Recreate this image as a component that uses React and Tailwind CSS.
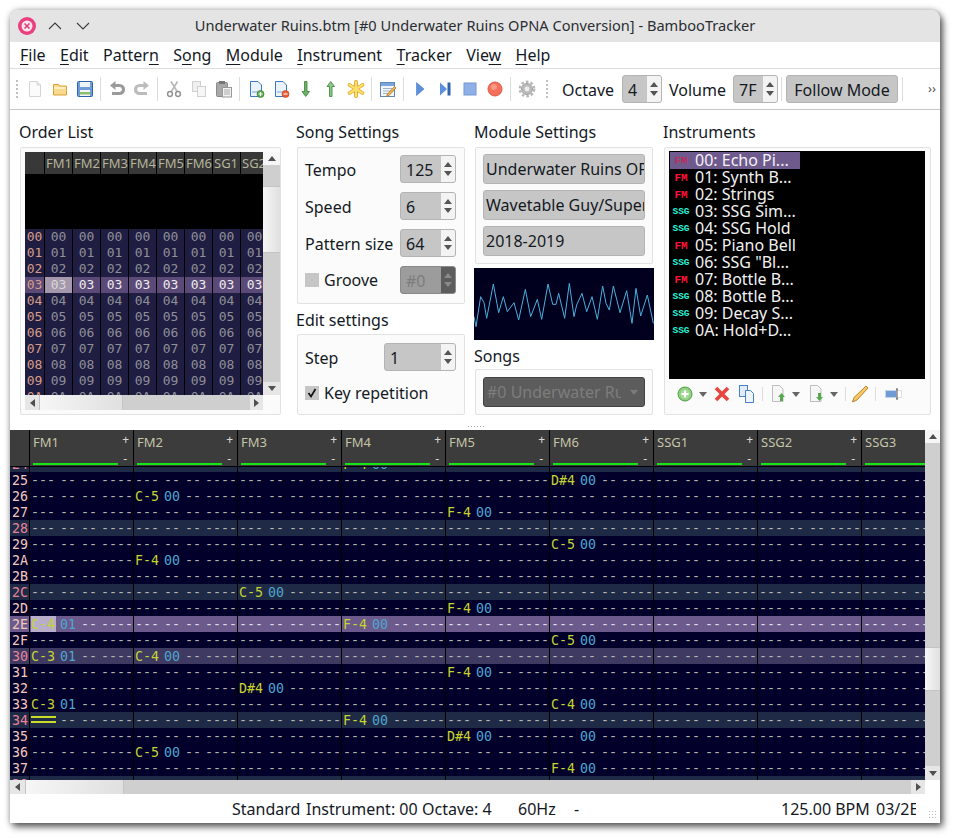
const uiFont = "font-['Noto_Sans','DejaVu_Sans',sans-serif]"
const monoFont = "font-['DejaVu_Sans_Mono',monospace]"

const Svg = ({size = 20, children}) => (
    <svg width={size} height={size} viewBox="0 0 20 20" className="block">{children}</svg>
)

const doc = "M4.5 2.5h7.5l3.5 3.5v11.5h-11z"

const icons = {
    newFile: <><path d={doc} fill="#fbfbfb" stroke="#d4d4d4"/><path d="M12 2.5v3.5h3.5" fill="#eee" stroke="#d4d4d4"/></>,
    open: <><path d="M3.5 5.5h5l1 1.5h7v9h-13z" fill="#f8d98e" stroke="#dc9f35"/><path d="M4 9h12" stroke="#fdf0c4" strokeWidth="2"/></>,
    save: <><rect x="2.5" y="2.5" width="15" height="15" rx="1" fill="#6f9bd6" stroke="#2f64aa"/><rect x="5" y="3" width="10" height="5" fill="#eef3fa"/><rect x="5" y="11" width="10" height="6" fill="#f4f4f4"/><rect x="5" y="13" width="10" height="2.5" fill="#8cc06c"/></>,
    undo: <><path d="M8 6.5h4.5a4 4 0 0 1 0 8H5" fill="none" stroke="#9a9a9a" strokeWidth="3.2"/><path d="M8.5 2v9L3 6.5z" fill="#9a9a9a"/></>,
    redo: <><path d="M12 6.5H7.5a4 4 0 0 0 0 8H15" fill="none" stroke="#bcbcbc" strokeWidth="3.2"/><path d="M11.5 2v9L17 6.5z" fill="#bcbcbc"/></>,
    cut: <><path d="M13.5 2.5L7 13M7 2.5l6.5 10.5" stroke="#b8b8b8" strokeWidth="1.6"/><circle cx="6" cy="15" r="2.4" fill="none" stroke="#949494" strokeWidth="1.5"/><circle cx="14" cy="15" r="2.4" fill="none" stroke="#949494" strokeWidth="1.5"/></>,
    copy: <><rect x="3.5" y="2.5" width="8" height="10" fill="#f0f0f0" stroke="#d0d0d0"/><rect x="8.5" y="7.5" width="8" height="10" fill="#f6f6f6" stroke="#d0d0d0"/></>,
    paste: <><rect x="2.5" y="3.5" width="11" height="14" rx="1" fill="#a8a8a8" stroke="#8a8a8a"/><rect x="5" y="2" width="6" height="3" fill="#777"/><rect x="8.5" y="8.5" width="9" height="9.5" fill="#f2f2f2" stroke="#999"/><path d="M10 11h6M10 13h6M10 15h6" stroke="#aaa"/></>,
    insert: <><path d={doc} fill="#eaf2fb" stroke="#3b78c0"/><path d="M6 13h6" stroke="#7aa7dc"/><circle cx="14.5" cy="15" r="3.5" fill="#5cae4c" stroke="#3a8030" strokeWidth="0.7"/><path d="M12.5 15h4M14.5 13v4" stroke="#fff" strokeWidth="1.2"/></>,
    remove: <><path d={doc} fill="#eaf2fb" stroke="#3b78c0"/><path d="M6 13h6" stroke="#7aa7dc"/><circle cx="14.5" cy="15" r="3.5" fill="#e8603a" stroke="#c0401c" strokeWidth="0.7"/><path d="M12.5 15h4" stroke="#fff" strokeWidth="1.2"/></>,
    down: <path d="M8.5 2.5h2.5v10h2.5L9.75 17.5 6 12.5h2.5z" fill="#6ab465" stroke="#3c7f3a" strokeWidth="0.8"/>,
    up: <path d="M8.5 17.5h2.5v-10h2.5L9.75 2.5 6 7.5h2.5z" fill="#8ccb86" stroke="#3c7f3a" strokeWidth="0.8"/>,
    star: <><path d="M10 3v14M3.5 6l13 8M16.5 6l-13 8" stroke="#e0a420" strokeWidth="3.8" strokeLinecap="round"/><path d="M10 3v14M3.5 6l13 8M16.5 6l-13 8" stroke="#fbe070" strokeWidth="2.2" strokeLinecap="round"/></>,
    edit: <><rect x="2.5" y="3.5" width="14" height="14" fill="#f2f6fb" stroke="#5f87b8"/><rect x="3" y="4" width="13" height="3" fill="#7ea5da"/><path d="M5 9.5h9M5 12h9M5 14.5h5" stroke="#9fb4cc"/><path d="M18 9l-7 7.5-2.5 1 1-2.5 7-7.5z" fill="#f0b848" stroke="#a86c18" strokeWidth="0.7"/></>,
    play: <path d="M6.5 3.5l7.5 6.5-7.5 6.5z" fill="#5b90dc" stroke="#4678c4" strokeWidth="0.6"/>,
    step: <><path d="M5 3.5l7 6.5-7 6.5z" fill="#5b90dc"/><rect x="12.5" y="3.5" width="3" height="13" fill="#2f64aa"/></>,
    stop: <rect x="4" y="4" width="12" height="12" fill="#8fb0e6" stroke="#7498d2"/>,
    record: <><circle cx="10" cy="10" r="7" fill="#f4705a" stroke="#e05a48"/><circle cx="9" cy="8" r="3" fill="#fb9a84"/></>,
    gear: <><circle cx="10" cy="10" r="5.5" fill="#bcbcbc" stroke="#a0a0a0"/><circle cx="10" cy="10" r="7.2" fill="none" stroke="#b8b8b8" strokeWidth="2.4" strokeDasharray="2.6 2.05"/><circle cx="10" cy="10" r="2.4" fill="#eee"/></>,
}

const ToolIcon = ({name}) => (
    <span className="flex h-[25px] w-[25px] shrink-0 items-center justify-center"><Svg>{icons[name]}</Svg></span>
)

const ToolSep = () => <span className="mx-[3px] h-[24px] w-px shrink-0 bg-[#dcdcdc]"/>

const Triangle = ({dir, color = '#4f4f4f'}) => {
    const points = {up: '0,5 4,0 8,5', down: '0,0 8,0 4,5', left: '5,0 5,8 0,4', right: '0,0 0,8 5,4'}[dir]
    const horizontal = dir === 'left' || dir === 'right'
    return (
        <svg width={horizontal ? 5 : 8} height={horizontal ? 8 : 5} viewBox={horizontal ? '0 0 5 8' : '0 0 8 5'}>
            <polygon points={points} fill={color}/>
        </svg>
    )
}

const Spin = ({value, width, disabled}) => (
    <div style={{width}} className={`flex h-[28px] shrink-0 overflow-hidden rounded-[3px] border ${disabled ? 'border-[#8a8a8a] bg-[#9c9c9c] text-[#7c7c7c]' : 'border-[#b4b4b4] bg-[#c6c6c6] text-[#14191f]'}`}>
        <span className="flex-1 pl-[5px] leading-[28px]">{value}</span>
        <span className={`flex w-[14px] flex-col items-center justify-center gap-[4px] ${disabled ? 'bg-[#5c5c5c]' : 'bg-[#f3f3f3]'}`}>
            <Triangle dir="up" color={disabled ? '#8a8a8a' : '#555'}/>
            <Triangle dir="down" color={disabled ? '#8a8a8a' : '#555'}/>
        </span>
    </div>
)

const Heading = ({children, className = 'h-[37px] pt-[12px]'}) => (
    <div className={`-ml-px leading-[20px] ${className}`}>{children}</div>
)

const Box = ({className = '', children}) => (
    <div className={`rounded-[2px] border border-[#e2e2e2] bg-[#fbfbfb] ${className}`}>{children}</div>
)

const TextField = ({children}) => (
    <div className="h-[30px] overflow-hidden whitespace-nowrap rounded-[3px] border border-[#b4b4b4] bg-[#c6c6c6] pl-[2px] leading-[29px] text-[#14191f]">{children}</div>
)

const Check = ({checked}) => (
    <span className="flex h-[14px] w-[14px] shrink-0 items-center justify-center bg-[#c6c6c6]">
        {checked && (
            <svg width="10" height="10" viewBox="0 0 10 10"><path d="M1.5 5l2.5 3.5L8.5 1" fill="none" stroke="#111" strokeWidth="1.7"/></svg>
        )}
    </span>
)

const ScrollHandle = ({className}) => (
    <div className={`border-[#c4c4c4] bg-[linear-gradient(90deg,#f6f6f6,#e0e0e0)] ${className}`}/>
)

const orderCols = ['FM1', 'FM2', 'FM3', 'FM4', 'FM5', 'FM6', 'SG1', 'SG2']

const OrderList = () => (
    <div className="flex w-[255px] flex-col">
        <div className="flex h-[243px]">
            <div className={`w-[238px] overflow-hidden bg-black ${monoFont} text-[13px]`}>
                <div className={`flex h-[22px] w-max bg-[#383838] text-[#b4b49a] ${uiFont} text-[13px] leading-[22px]`}>
                    <div className="w-[19px]"/>
                    {orderCols.map((c) => (
                        <div key={c} className="w-[28px] border-l border-black pl-px">{c}</div>
                    ))}
                </div>
                <div className="h-[55px]"/>
                {Array.from({length: 11}, (_, r) => {
                    const label = `0${r.toString(16).toUpperCase()}`
                    const current = r === 3
                    return (
                        <div key={r} className={`flex h-4 w-max leading-4 ${current ? 'bg-[#5b4a78] text-[#ececec]' : 'bg-[#1f1e42] text-[#8f8f98]'}`}>
                            <div className={`w-[19px] text-center text-[#d89c84] ${current ? 'bg-[#5b4a78]' : 'bg-[#1f1e42]'}`}>{label}</div>
                            {orderCols.map((c, i) => (
                                <div key={c} className={`w-[28px] border-l border-black text-center ${current && i === 0 ? 'bg-[#a598ac] text-[#d8d8d8]' : ''}`}>{label}</div>
                            ))}
                        </div>
                    )
                })}
            </div>
            <div className="flex w-[17px] flex-col bg-[#cfcfcf]">
                <div className="flex h-[13px] items-center justify-center bg-[#f6f6f6]"><Triangle dir="up"/></div>
                <div className="h-[21px]"/>
                <ScrollHandle className="h-[67px] border-y"/>
                <div className="flex-1"/>
                <div className="flex h-[13px] items-center justify-center bg-[#e6e6e6]"><Triangle dir="down"/></div>
            </div>
        </div>
        <div className="flex h-[15px]">
            <div className="flex flex-1 bg-[#cfcfcf]">
                <div className="flex w-[14px] items-center justify-center bg-[#e6e6e6]"><Triangle dir="left"/></div>
                <ScrollHandle className="w-[84px] border-x"/>
                <div className="flex-1"/>
                <div className="flex w-[13px] items-center justify-center bg-[#e6e6e6]"><Triangle dir="right"/></div>
            </div>
            <div className="w-[17px]"/>
        </div>
    </div>
)

const wave = '552,590 558,620 572,530 582,548 590,595 610,492 626,578 640,530 652,575 672,548 686,600 706,508 722,590 742,538 755,598 774,492 788,553 798,553 806,520 824,595 838,490 852,590 860,555 876,520 890,575 906,530 922,598 938,498 948,550 958,570 970,498 990,578 1010,512 1026,610 1038,505 1052,588 1072,525 1090,610'

const Waveform = () => (
    <svg width="180" height="72" viewBox="552 444 540 216" className="block bg-[#00001e]">
        <polyline points={wave} fill="none" stroke="#4ab0dc" strokeWidth="3"/>
    </svg>
)

const instruments = [
    ['FM', '00: Echo Pi...'], ['FM', '01: Synth B...'], ['FM', '02: Strings'], ['SSG', '03: SSG Sim...'],
    ['SSG', '04: SSG Hold'], ['FM', '05: Piano Bell'], ['SSG', '06: SSG "Bl...'], ['FM', '07: Bottle B...'],
    ['SSG', '08: Bottle B...'], ['SSG', '09: Decay S...'], ['SSG', '0A: Hold+D...'],
]

const InstrumentList = () => (
    <div className="h-[228px] w-[256px] overflow-hidden bg-black pt-px pl-px text-[#f2f2f2]">
        {instruments.map(([type, name], i) => (
            <div key={name} className={`flex h-[17px] w-[130px] whitespace-nowrap ${i === 0 ? 'bg-[#6f5a8e]' : ''}`}>
                <span className={`w-[25px] shrink-0 pr-[3px] text-center font-['Liberation_Mono',monospace] font-bold leading-[18px] ${type === 'FM' ? 'text-[11px]' : 'text-[9.5px] tracking-[-0.1px]'} ${type === 'FM' ? (i === 0 ? 'text-[#b8305c]' : 'text-[#ff1238]') : 'text-[#28f4d8]'}`}>
                    {type}
                </span>
                <span className="text-[16px] leading-[16px]">{name}</span>
            </div>
        ))}
    </div>
)

const DropArrow = () => <span className="mx-[4px]"><Triangle dir="down" color="#666"/></span>

const InstrumentTools = () => (
    <div className="ml-[6px] flex h-[30px] items-center">
        <Svg><circle cx="10" cy="10" r="7" fill="#8fcf80" stroke="#4f9e48"/><circle cx="10" cy="10" r="4.5" fill="#a8dc9c"/><path d="M6.5 10h7M10 6.5v7" stroke="#fff" strokeWidth="2"/></Svg>
        <DropArrow/>
        <span className="ml-[1px]"><Svg><path d="M4 4l12 12M16 4L4 16" stroke="#e8453f" strokeWidth="3.6"/></Svg></span>
        <span className="ml-[5px]"><Svg><rect x="2.5" y="1.5" width="8" height="11" fill="#dfeafa" stroke="#4a80c8"/><path d="M8.5 6.5h5l3 3v9h-8z" fill="#eef4fc" stroke="#4a80c8"/></Svg></span>
        <span className="mx-[5px] h-[14px] w-px bg-[#dcdcdc]"/>
        <Svg><path d="M4.5 1.5h7l3.5 3.5v12.5h-10.5z" fill="#f6f6f6" stroke="#bdbdbd"/><path d="M12 17v-4h-2l3.5-4 3.5 4h-2v4z" fill="#58a850"/></Svg>
        <DropArrow/>
        <span className="ml-[2px]"><Svg><path d="M4.5 1.5h7l3.5 3.5v12.5h-10.5z" fill="#f6f6f6" stroke="#bdbdbd"/><path d="M12 9v4h-2l3.5 4 3.5-4h-2v-4z" fill="#58a850"/></Svg></span>
        <DropArrow/>
        <span className="mx-[3px] h-[14px] w-px bg-[#dcdcdc]"/>
        <span className="ml-[1px]"><Svg><path d="M16 2l2 2-11 12-4.5 2 1.5-4.5z" fill="#f5c860" stroke="#a86c18" strokeWidth="0.8"/></Svg></span>
        <span className="mx-[5px] h-[14px] w-px bg-[#dcdcdc]"/>
        <span className="ml-[3px]"><Svg><rect x="1.5" y="6.5" width="11" height="7" fill="#6f9bd6" stroke="#c8d4e4"/><rect x="12.5" y="6.5" width="5" height="7" fill="#fff" stroke="#ddd"/><path d="M13 5v10M12 5h2M12 15h2" stroke="#555"/></Svg></span>
    </div>
)

const channels = ['FM1', 'FM2', 'FM3', 'FM4', 'FM5', 'FM6', 'SSG1', 'SSG2', 'SSG3']

// row -> channel index -> [note, instrument]
const notes = {
    0x24: {3: ['F-4', '00']},
    0x25: {5: ['D#4', '00']},
    0x26: {1: ['C-5', '00']},
    0x27: {4: ['F-4', '00']},
    0x29: {5: ['C-5', '00']},
    0x2a: {1: ['F-4', '00']},
    0x2c: {2: ['C-5', '00']},
    0x2d: {4: ['F-4', '00']},
    0x2e: {0: ['C-4', '01'], 3: ['F-4', '00']},
    0x2f: {5: ['C-5', '00']},
    0x30: {0: ['C-3', '01'], 1: ['C-4', '00']},
    0x31: {4: ['F-4', '00']},
    0x32: {2: ['D#4', '00']},
    0x33: {0: ['C-3', '01'], 5: ['C-4', '00']},
    0x34: {0: ['===', null], 3: ['F-4', '00']},
    0x35: {4: ['D#4', '00'], 5: ['---', '00']},
    0x36: {1: ['C-5', '00']},
    0x37: {5: ['F-4', '00']},
}

const Field = ({w, className = '', children}) => (
    <span className={`inline-block ${className}`} style={{width: w}}>{children}</span>
)

const PatternCell = ({data, cursor, dashColor}) => {
    const [note, inst] = data || ['---', '--']
    return (
        <div className={`flex h-4 w-[104px] shrink-0 whitespace-pre border-l border-black pl-px leading-[18px] ${dashColor}`}>
            {note === '===' ? (
                <span className="mt-[4px] h-[7px] w-[25px] border-y-2 border-[#c8dc28]"/>
            ) : (
                <Field w={25} className={`${note === '---' ? '' : 'text-[#c4d430]'} ${cursor ? 'bg-[#b8aecb]' : ''}`}>{note}</Field>
            )}
            <Field w={4}/>
            <Field w={16} className={inst && inst !== '--' ? 'text-[#4ea6d0]' : ''}>{inst || '--'}</Field>
            <Field w={5}/>
            <Field w={16}>--</Field>
            <Field w={4}/>
            <Field w={32}>----</Field>
        </div>
    )
}

const PatternRow = ({row}) => {
    const current = row === 0x2e
    let bg = 'bg-[#02002a]'
    if (current) bg = 'bg-[#6c5a8c]'
    else if (row % 16 === 0) bg = 'bg-[#3e3a62]'
    else if (row % 4 === 0) bg = 'bg-[#1f2a46]'
    const numColor = !current && row % 4 === 0 ? 'text-[#e8829a]' : 'text-[#f2cabc]'
    return (
        <div className={`flex h-4 w-max ${bg}`}>
            <div className={`w-[19px] pl-[2px] leading-[18px] ${numColor}`}>{row.toString(16).toUpperCase()}</div>
            {channels.map((c, i) => (
                <PatternCell key={c} data={notes[row]?.[i]} cursor={current && i === 0} dashColor={current ? 'text-[#dcd8e4]' : 'text-[#b4b4b0]'}/>
            ))}
        </div>
    )
}

const PatternEditor = () => {
    const rows = []
    for (let r = 0x24; r <= 0x38; r++) rows.push(r)
    return (
        <div className="flex h-[364px] shrink-0">
            <div className="flex w-[915px] flex-col overflow-hidden">
                <div className={`flex h-[37px] w-max shrink-0 border-b border-black bg-[#3c3c3c] ${uiFont} text-[#c4c4a8]`}>
                    <div className="w-[19px]"/>
                    {channels.map((c) => (
                        <div key={c} className="h-[36px] w-[104px] border-l border-black pl-[3px]">
                            <div className="flex h-[26px] items-start justify-between pr-[4px] text-[13px] leading-[24px]">
                                <span>{c}</span>
                                <span className="text-[12px] leading-[20px] text-[#d8d8d8]">+</span>
                            </div>
                            <div className="flex h-[10px] justify-between pr-[6px]">
                                <span className="mb-px h-[2px] w-[85px] self-end bg-[#14e614]"/>
                                <span className="self-start text-[12px] leading-[6px] text-[#d8d8d8]">-</span>
                            </div>
                        </div>
                    ))}
                </div>
                <div className="flex-1 overflow-hidden bg-[#02002a]">
                    <div className={`-mt-[11px] ${monoFont} text-[13.3px]`}>
                        {rows.map((r) => <PatternRow key={r} row={r}/>)}
                    </div>
                </div>
                <div className="flex h-[14px] shrink-0 bg-[#cfcfcf]">
                    <div className="flex w-[15px] items-center justify-center bg-[#e6e6e6]"><Triangle dir="left"/></div>
                    <ScrollHandle className="w-[99px] border-x"/>
                    <div className="flex-1"/>
                    <div className="flex w-[14px] items-center justify-center bg-[#e6e6e6]"><Triangle dir="right"/></div>
                </div>
            </div>
            <div className="flex w-[15px] flex-col">
                <div className="flex flex-1 flex-col bg-[#cfcfcf]">
                    <div className="flex h-[13px] items-center justify-center bg-[#f6f6f6]"><Triangle dir="up"/></div>
                    <div className="h-[204px]"/>
                    <ScrollHandle className="h-[44px] border-y"/>
                    <div className="flex-1"/>
                    <div className="flex h-[14px] items-center justify-center bg-[#e6e6e6]"><Triangle dir="down"/></div>
                </div>
                <div className="h-[14px] bg-white"/>
            </div>
        </div>
    )
}

const menus = [
    ['File', 'F', 0], ['Edit', 'E', 0], ['Pattern', 'n', 6], ['Song', 'o', 1], ['Module', 'M', 0],
    ['Instrument', 'I', 0], ['Tracker', 'T', 0], ['View', 'w', 3], ['Help', 'H', 0],
]

const SpinRow = ({label, value, width = 56, disabled}) => (
    <div className="flex items-center justify-between pr-px">
        <span className="pt-[2px]">{label}</span>
        <Spin value={value} width={width} disabled={disabled}/>
    </div>
)

export default function App() {
    return (
        <div className={`h-[838px] w-[956px] overflow-hidden bg-white pt-[10px] pl-[10px] text-[16px] text-[#14191f] ${uiFont}`}>
            <div className="flex h-[813px] w-[930px] flex-col overflow-hidden rounded-t-[9px] bg-white shadow-[3px_4px_7px_rgba(0,0,0,0.6),0_0_6px_rgba(0,0,0,0.3)]">
                <div className="relative flex h-[32px] shrink-0 items-center justify-center bg-[#e4e4e4] text-[14.6px] text-[#2a2e32]">
                    <div className="absolute left-[8px] top-[7px] flex items-center gap-[10px]">
                        <svg width="18" height="18" viewBox="0 0 18 18"><circle cx="9" cy="9" r="9" fill="#ea3f7e"/><circle cx="9" cy="9" r="5.5" fill="#fbe4ec"/><path d="M6.5 6.5l5 5M11.5 6.5l-5 5" stroke="#e23a74" strokeWidth="1.5"/></svg>
                        <svg width="18" height="18" viewBox="0 0 18 18"><path d="M3 12l6-6 6 6" fill="none" stroke="#3a3e42" strokeWidth="1.1"/></svg>
                        <svg width="18" height="18" viewBox="0 0 18 18"><path d="M3 6l6 6 6-6" fill="none" stroke="#3a3e42" strokeWidth="1.1"/></svg>
                    </div>
                    Underwater Ruins.btm [#0 Underwater Ruins OPNA Conversion] - BambooTracker
                </div>
                <div className="flex h-[27px] shrink-0 items-center gap-[14.4px] border-b border-[#dcdcdc] pl-[10px] leading-[26px]">
                    {menus.map(([name, key, at]) => (
                        <span key={name}>
                            {name.slice(0, at)}
                            <u className="underline-offset-[3px] [text-decoration-skip-ink:none]">{key}</u>
                            {name.slice(at + 1)}
                        </span>
                    ))}
                </div>
                <div className="flex h-[41px] shrink-0 items-center border-b border-[#c8c8c8] pl-[5px]">
                    <span className="mr-[3px] h-[20px] w-[4px] shrink-0 bg-[radial-gradient(#c0c0c0_1px,transparent_1px)] bg-[length:4px_4px]"/>
                    <ToolIcon name="newFile"/>
                    <ToolIcon name="open"/>
                    <ToolIcon name="save"/>
                    <ToolSep/>
                    <ToolIcon name="undo"/>
                    <ToolIcon name="redo"/>
                    <ToolSep/>
                    <ToolIcon name="cut"/>
                    <ToolIcon name="copy"/>
                    <ToolIcon name="paste"/>
                    <ToolSep/>
                    <ToolIcon name="insert"/>
                    <ToolIcon name="remove"/>
                    <ToolIcon name="down"/>
                    <ToolIcon name="up"/>
                    <ToolIcon name="star"/>
                    <ToolSep/>
                    <ToolIcon name="edit"/>
                    <ToolSep/>
                    <ToolIcon name="play"/>
                    <ToolIcon name="step"/>
                    <ToolIcon name="stop"/>
                    <ToolIcon name="record"/>
                    <ToolSep/>
                    <ToolIcon name="gear"/>
                    <span className="ml-[6px] mr-[13px] h-[20px] w-[4px] shrink-0 bg-[radial-gradient(#c0c0c0_1px,transparent_1px)] bg-[length:4px_4px]"/>
                    <span className="w-[60px] pt-[2px]">Octave</span>
                    <Spin value="4" width={40}/>
                    <span className="ml-[7px] w-[64px] pt-[2px]">Volume</span>
                    <Spin value="7F" width={45}/>
                    <span className="ml-[3px] mr-[4px] h-[24px] w-px shrink-0 bg-[#dcdcdc]"/>
                    <div className="h-[28px] w-[112px] shrink-0 rounded-[3px] border border-[#b4b4b4] bg-[#c6c6c6] text-center leading-[28px]">Follow Mode</div>
                    <span className="ml-[4px] h-[24px] w-px shrink-0 bg-[#dcdcdc]"/>
                    <span className="ml-[25px] text-[13px] text-[#555]">››</span>
                </div>
                <div className="relative flex h-[320px] shrink-0 pl-[10px]">
                    <div className="w-[261px] shrink-0">
                        <Heading>Order List</Heading>
                        <Box className="flex h-[268px] pt-[4px] pl-[4px]"><OrderList/></Box>
                    </div>
                    <div className="ml-[16px] w-[168px] shrink-0">
                        <Heading>Song Settings</Heading>
                        <Box className="flex h-[157px] flex-col gap-[9px] px-[7px] pt-[7px]">
                            <SpinRow label="Tempo" value="125"/>
                            <SpinRow label="Speed" value="6"/>
                            <SpinRow label="Pattern size" value="64"/>
                            <div className="flex items-center justify-between pr-px">
                                <span className="flex items-center gap-[5px]"><Check/>Groove</span>
                                <Spin value="#0" width={56} disabled/>
                            </div>
                        </Box>
                        <Heading className="h-[30px] pt-[6px]">Edit settings</Heading>
                        <Box className="h-[81px] px-[7px] pt-[8px]">
                            <SpinRow label="Step" value="1" width={72}/>
                            <div className="mt-[8px] flex items-center gap-[5px] leading-[28px]"><Check checked/>Key repetition</div>
                        </Box>
                    </div>
                    <div className="ml-[9px] w-[180px] shrink-0">
                        <div className="h-[37px] pt-[12px] leading-[20px]">Module Settings</div>
                        <Box className="mx-px flex h-[117px] flex-col gap-[6px] px-[7px] pt-[6px]">
                            <TextField>Underwater Ruins OPNA Conversion</TextField>
                            <TextField>Wavetable Guy/Supernova</TextField>
                            <TextField>2018-2019</TextField>
                        </Box>
                        <div className="mt-[4px]"><Waveform/></div>
                        <div className="h-[29px] pt-[6px] leading-[20px]">Songs</div>
                        <Box className="mx-px h-[46px] px-[7px] pt-[7px]">
                            <div className="flex h-[30px] items-center justify-between overflow-hidden rounded-[3px] border border-[#444] bg-[#5c5c5c] pr-[6px] pl-[3px] text-[#7c7c7c]">
                                <span className="w-[134px] overflow-hidden whitespace-nowrap">#0 Underwater Ruins</span>
                                <Triangle dir="down" color="#7c7c7c"/>
                            </div>
                        </Box>
                    </div>
                    <div className="ml-[10px] w-[267px] shrink-0">
                        <Heading>Instruments</Heading>
                        <Box className="h-[268px] pt-[3px] pl-[4px]">
                            <InstrumentList/>
                            <InstrumentTools/>
                        </Box>
                    </div>
                    <div className="absolute bottom-[3px] left-[458px] flex gap-[2px]">
                        {[0, 1, 2, 3, 4, 5].map((d) => <span key={d} className="h-px w-px bg-[#b0b0b0]"/>)}
                    </div>
                </div>
                <PatternEditor/>
                <div className="relative flex h-[29px] shrink-0 items-center whitespace-nowrap pl-[222px] leading-[28px]">
                    <span className="w-[74px]">Standard</span>
                    <span className="w-[116px]">Instrument: 00</span>
                    <span className="w-[96px]">Octave: 4</span>
                    <span className="w-[56px]">60Hz</span>
                    <span className="w-[207px]">-</span>
                    <span className="w-[95px]">125.00 BPM</span>
                    <span className="w-[40px] overflow-hidden">03/2E</span>
                    <span className="absolute right-[2px] bottom-[3px] h-[10px] w-[10px] bg-[radial-gradient(#b8b8b8_1px,transparent_1px)] bg-[length:3px_3px]"/>
                </div>
            </div>
        </div>
    )
}
